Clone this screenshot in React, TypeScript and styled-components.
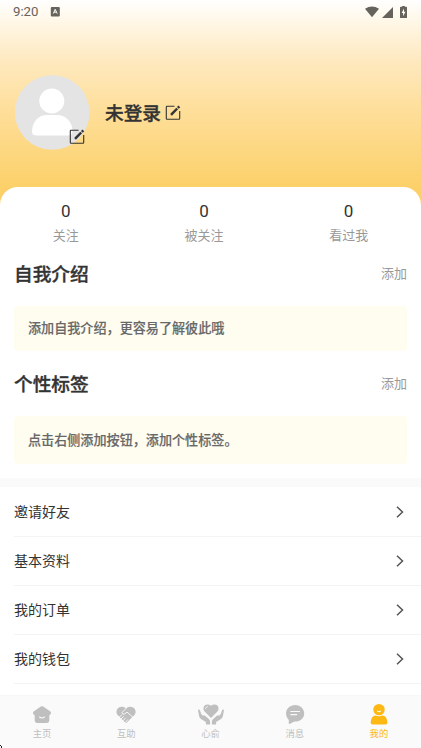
import React from 'react';
import styled, { createGlobalStyle } from 'styled-components';

const GlobalStyle = createGlobalStyle`
  * { box-sizing: border-box; }
  html, body { margin: 0; padding: 0; background: #fff; }
  body { font-family: Roboto, "Noto Sans CJK SC", sans-serif; color: #333; overflow: hidden; }
  svg { display: block; flex: none; }
`;

const Screen = styled.div`
  position: relative;
  width: 421px;
  height: 748px;
  display: flex;
  flex-direction: column;
  overflow: hidden;
  background: linear-gradient(180deg, #fff 0px, #fff4de 30px, #fee9c0 60px, #fedf9a 110px, #fcd06a 187px, #fccf66 210px);
`;

const StatusBar = styled.header`
  height: 24px;
  flex: none;
  display: flex;
  align-items: center;
  justify-content: space-between;
  padding: 0 14px 0 13px;
  font-size: 13.2px;
  line-height: 24px;
  color: #66625c;
`;

const StatusGroup = styled.div<{ $gap: number }>`
  display: flex;
  align-items: center;
  gap: ${(p) => p.$gap}px;
`;

const Profile = styled.section`
  height: 163px;
  flex: none;
  display: flex;
  align-items: flex-start;
  padding: 51px 15px 0;
`;

const Avatar = styled.div`
  position: relative;
  width: 75px;
  height: 75px;
`;

const AvatarEdit = styled.div`
  position: absolute;
  left: 54px;
  top: 54px;
`;

const NameRow = styled.div`
  display: flex;
  align-items: center;
  gap: 4px;
  height: 75px;
  margin-left: 15px;
`;

const Name = styled.h1`
  margin: 2px 0 0;
  font-size: 18.7px;
  line-height: 28px;
  font-weight: 500;
  -webkit-text-stroke: 0.35px currentColor;
`;

const Sheet = styled.main`
  flex: 1;
  min-height: 0;
  overflow: hidden;
  background: #fff;
  border-radius: 18px 18px 0 0;
`;

const Stats = styled.div`
  display: flex;
  justify-content: space-around;
  height: 70px;
  padding-top: 14px;
`;

const Stat = styled.div`
  display: flex;
  flex-direction: column;
  align-items: center;
  gap: 5px;
`;

const StatValue = styled.span`
  font-size: 17px;
  line-height: 20px;
`;

const Muted = styled.span`
  font-size: 13px;
  line-height: 20px;
  color: #999;
`;

const SectionHead = styled.div<{ $height: number; $top?: number }>`
  display: flex;
  align-items: center;
  justify-content: space-between;
  height: ${(p) => p.$height}px;
  padding: ${(p) => p.$top ?? 0}px 14px 0;

  ${Muted} {
    margin-bottom: 2px;
  }
`;

const Title = styled.h2`
  margin: 0;
  font-size: 18.7px;
  line-height: 28px;
  font-weight: 500;
  -webkit-text-stroke: 0.35px currentColor;
`;

const Note = styled.p<{ $height: number }>`
  margin: 14px 14px 0;
  height: ${(p) => p.$height}px;
  padding-left: 14px;
  line-height: ${(p) => p.$height + 1}px;
  font-size: 13.1px;
  font-weight: 500;
  -webkit-text-stroke: 0.15px currentColor;
  color: #686868;
  background: #fffdf0;
  border-radius: 4px;
`;

const Divider = styled.div`
  height: 9px;
  margin-top: 14px;
  background: #fafafa;
`;

const MenuRow = styled.div`
  display: flex;
  align-items: center;
  justify-content: space-between;
  height: 49.1px;
  margin-left: 14px;
  padding-right: 17px;
  border-bottom: 1px solid #f4f4f4;
  font-size: 14px;

  ${Divider} + & {
    height: 50px;
  }
`;

const MenuLabel = styled.span`
  padding-bottom: 2px;
`;

const TabBar = styled.nav`
  height: 53px;
  flex: none;
  display: flex;
  background: #fafafa;
  border-top: 1px solid #f7f7f7;
`;

const Tab = styled.div<{ $active?: boolean }>`
  flex: 1;
  display: flex;
  flex-direction: column;
  align-items: center;
  gap: 1px;
  padding-top: 6px;
  color: ${(p) => (p.$active ? '#fdb813' : '#bfbfbf')};
  font-size: 9.33px;
  line-height: 12px;
`;

const CornerMark = styled.div`
  position: absolute;
  left: 0;
  bottom: 0;
`;

const EditIcon = () => (
  <svg width="16" height="16" viewBox="0 0 16 16" fill="none" stroke="#333">
    <path d="M9.5 1.3H2Q1.3 1.3 1.3 2V13.6Q1.3 14.3 2 14.3H14Q14.7 14.3 14.7 13.6V6" strokeWidth="1.1" />
    <path d="M6 9.9 12.2 3.5" strokeWidth="2.5" />
    <path d="M12.9 2.8 14.3 1.4" strokeWidth="2.5" />
  </svg>
);

const Chevron = () => (
  <svg width="8" height="12" viewBox="0 0 8 12" fill="none" stroke="#555" strokeWidth="1.5">
    <path d="M1 .8 6.5 6 1 11.2" />
  </svg>
);

const icons = {
  home: (
    <svg width="28" height="25" viewBox="0 -0.8 28 25">
      <path d="M12.8 3.8Q14 3 15.2 3.8L22.4 8.8Q23.8 10 22.4 11.6L21.3 12.4V17.8Q21.3 20.1 19 20.1H9Q6.7 20.1 6.7 17.8V12.4L5.6 11.6Q4.2 10 5.6 8.8Z" fill="currentColor" />
      <path d="M11.5 14.2Q14 16.1 16.5 14.2" fill="none" stroke="#fafafa" strokeWidth="1.1" strokeLinecap="round" />
    </svg>
  ),
  help: (
    <svg width="28" height="25" viewBox="0 -0.6 28 25">
      <path d="M14 20.6 6 13Q3.2 9.8 5.3 6.4C7.4 3.3 11.8 3.6 14 5.8 16.4 3.4 20.8 3.4 22.8 6.5Q24.8 9.8 22 13Z" fill="currentColor" />
      <path d="M14 5.8 10 10Q10.2 12.2 12.5 11.5L15 9.5 20.8 14.5M7.2 14.4 9.5 12.7M9 16.3 11.5 14M11 18.2 13.4 15.6M13.2 20 15.6 17.2" fill="none" stroke="#fafafa" strokeWidth=".9" strokeLinecap="round" />
    </svg>
  ),
  heart: (
    <svg width="28" height="25" viewBox="0 0 28 25">
      <path d="M14 16 7.8 9.7C5.2 6.8 6.7 2.5 10.2 2.4Q12.7 2.4 14 3.8 15.4 2.4 17.8 2.4C21.4 2.5 22.8 6.8 20.2 9.7Z" fill="currentColor" />
      <path d="M8.4 6.7Q8.8 4.6 10.8 4.4" fill="none" stroke="#fafafa" strokeWidth=".7" strokeLinecap="round" />
      <path d="M1.4 7.5Q3 7 3.4 9.4L4.2 12 6 13.7Q7 12.8 8.4 14.1L11.8 17Q13.1 18 13.1 19.5V22.5H8.9V19.9L4.4 17.2Q2.4 16 2 13.7L1.1 8.5Q1 7.8 1.4 7.5ZM26.6 7.5Q25 7 24.6 9.4L23.8 12 22 13.7Q21 12.8 19.6 14.1L16.2 17Q14.9 18 14.9 19.5V22.5H19.1V19.9L23.6 17.2Q25.6 16 26 13.7L26.9 8.5Q27 7.8 26.6 7.5Z" fill="currentColor" />
    </svg>
  ),
  message: (
    <svg width="28" height="25" viewBox="0 0 28 25">
      <path d="M14.2 3C19.4 3 23.2 6.8 23.2 11.4S19.4 19.6 14.2 19.6Q12.7 19.7 11.4 20.6L8.7 22Q7.8 22.3 7.8 21.3V18Q5 15.4 5 11.4C5 6.8 9 3 14.2 3Z" fill="currentColor" />
      <path d="M9.8 9.5H18.5M9.8 12.6H15.6" stroke="#fafafa" strokeWidth="1.1" strokeLinecap="round" />
    </svg>
  ),
  mine: (
    <svg width="28" height="25" viewBox="0 0 28 25">
      <circle cx="14" cy="7.6" r="5.7" fill="currentColor" />
      <path d="M5.6 20.2Q6.3 13.7 10.5 13.5Q14 15 17.5 13.5Q21.8 13.7 22.4 20.2Q22.5 22.4 20.2 22.4H7.8Q5.5 22.4 5.6 20.2Z" fill="currentColor" />
      <path d="M12.3 9.2Q14 10.7 15.7 9.2" fill="none" stroke="#fff" strokeWidth="1" strokeLinecap="round" />
    </svg>
  ),
};

const stats = ['关注', '被关注', '看过我'];
const menu = ['邀请好友', '基本资料', '我的订单', '我的钱包'];
const tabs: { label: string; icon: keyof typeof icons }[] = [
  { label: '主页', icon: 'home' },
  { label: '互助', icon: 'help' },
  { label: '心俞', icon: 'heart' },
  { label: '消息', icon: 'message' },
  { label: '我的', icon: 'mine' },
];

export default function App() {
  return (
    <Screen>
      <GlobalStyle />
      <StatusBar>
        <StatusGroup $gap={12}>
          <span>9:20</span>
          <svg width="10" height="10" viewBox="0 0 10 10">
            <rect x=".8" y="0" width="9" height="9.4" rx="1" fill="#66625c" />
            <path d="M3.3 6.6 5.2 2.3 7.2 6.6M4 5.2H6.4" fill="none" stroke="#fff" strokeWidth="1" />
          </svg>
        </StatusGroup>
        <StatusGroup $gap={3}>
          <svg width="14" height="12" viewBox="0 0 15 12"><path d="M0 2.4Q7.5-2.2 15 2.4L7.5 11.5Z" fill="#66625c" /></svg>
          <svg width="11" height="11" viewBox="0 0 11 11"><path d="M0 11 11 0V11Z" fill="#66625c" /></svg>
          <svg width="11" height="13" viewBox="1 0.5 11 13">
            <path d="M5.8 1.2H7.2V0H9.8V1.2H11.2Q12 1.2 12 2V12Q12 12.6 11.2 12.6H5.8Q5 12.6 5 12V2Q5 1.2 5.8 1.2Z" fill="#66625c" />
            <path d="M9 3 6.6 7.4H8.1V10.8L10.5 6.3H9Z" fill="#fff" />
          </svg>
        </StatusGroup>
      </StatusBar>
      <Profile>
        <Avatar>
          <svg width="75" height="75" viewBox="0 0 75 75">
            <circle cx="37.2" cy="37.5" r="37.3" fill="#e4e4e4" />
            <circle cx="36.8" cy="26" r="12.5" fill="#fff" />
            <path d="M17 57C17 46 24 40 32 40H42C51 40 57.5 47 57.5 56Q57.5 60.5 53 60.5H22Q17 60.5 17 57Z" fill="#fff" />
          </svg>
          <AvatarEdit><EditIcon /></AvatarEdit>
        </Avatar>
        <NameRow>
          <Name>未登录</Name>
          <EditIcon />
        </NameRow>
      </Profile>
      <Sheet>
        <Stats>
          {stats.map((s) => (
            <Stat key={s}>
              <StatValue>0</StatValue>
              <Muted>{s}</Muted>
            </Stat>
          ))}
        </Stats>
        <SectionHead $height={35}>
          <Title>自我介绍</Title>
          <Muted>添加</Muted>
        </SectionHead>
        <Note $height={45}>添加自我介绍，更容易了解彼此哦</Note>
        <SectionHead $height={51} $top={16}>
          <Title>个性标签</Title>
          <Muted>添加</Muted>
        </SectionHead>
        <Note $height={48}>点击右侧添加按钮，添加个性标签。</Note>
        <Divider />
        {menu.map((m) => (
          <MenuRow key={m}>
            <MenuLabel>{m}</MenuLabel>
            <Chevron />
          </MenuRow>
        ))}
      </Sheet>
      <TabBar>
        {tabs.map((t) => (
          <Tab key={t.label} $active={t.icon === 'mine'}>
            {icons[t.icon]}
            <span>{t.label}</span>
          </Tab>
        ))}
      </TabBar>
      <CornerMark>
        <svg width="3" height="3" viewBox="0 0 3 3"><path d="M0 0H1V1H2V3H1V1H0Z" fill="#222" /></svg>
      </CornerMark>
    </Screen>
  );
}
